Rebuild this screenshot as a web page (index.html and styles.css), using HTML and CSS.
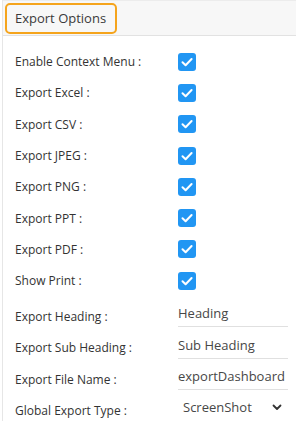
FILE: index.html
```html
<!DOCTYPE html>
<html lang="en">
<head>
  <meta charset="UTF-8" />
  <meta name="viewport" content="width=device-width, initial-scale=1.0"/>
  <title>Export Options</title>
  <link rel="stylesheet" href="styles.css">
</head>
<body>
  <div class="panel">
    <div class="panel-head">
      <span class="head-title">Export Options</span>
    </div>

    <div class="rows">
      <div class="row"><label>Enable Context Menu :</label><span class="check"></span></div>
      <div class="row"><label>Export Excel :</label><span class="check"></span></div>
      <div class="row"><label>Export CSV :</label><span class="check"></span></div>
      <div class="row"><label>Export JPEG :</label><span class="check"></span></div>
      <div class="row"><label>Export PNG :</label><span class="check"></span></div>
      <div class="row"><label>Export PPT :</label><span class="check"></span></div>
      <div class="row"><label>Export PDF :</label><span class="check"></span></div>
      <div class="row"><label>Show Print :</label><span class="check"></span></div>
      <div class="row field"><label>Export Heading :</label><input type="text" value="Heading" /></div>
      <div class="row field"><label>Export Sub Heading :</label><input type="text" value="Sub Heading" /></div>
      <div class="row field"><label>Export File Name :</label><input type="text" value="exportDashboard" /></div>
      <div class="row field"><label>Global Export Type :</label>
        <div class="select">
          <span>ScreenShot</span>
          <svg width="10" height="7" viewBox="0 0 10 7"><path d="M1.5 1.5 L5 5 L8.5 1.5" fill="none" stroke="#333" stroke-width="1.8" stroke-linecap="round" stroke-linejoin="round"/></svg>
        </div>
      </div>
    </div>
  </div>

  <template id="tick">
    <svg width="18" height="18" viewBox="0 0 18 18"><path d="M4.5 9.3 L7.6 12.3 L13.6 6" fill="none" stroke="#fff" stroke-width="2" stroke-linecap="round" stroke-linejoin="round"/></svg>
  </template>
  <script>
    const tick = document.getElementById("tick");
    document.querySelectorAll(".check").forEach(box => {
      box.appendChild(tick.content.cloneNode(true));
    });
  </script>
</body>
</html>
```

FILE: styles.css
```css
* {
  box-sizing: border-box;
}

body {
  margin: 0;
  padding: 0;
  font-family: "Open Sans", "Noto Sans", sans-serif;
  color: #333;
  background: #fff;
}

.panel {
  margin-left: 2px;
  border-left: 1px solid #e6e6e6;
  min-height: 421px;
}

.panel-head {
  height: 36px;
  padding: 2px 0 0 2px;
  background: #f7f7f7;
  border-top: 1px solid #ececec;
  border-bottom: 1px solid #e2e2e2;
}

.head-title {
  display: inline-block;
  height: 31px;
  line-height: 27px;
  padding: 0 9px 0 8px;
  border: 2.5px solid #f5a41c;
  border-radius: 5px;
  font-size: 13px;
  color: #3a3a3a;
}

.rows {
  padding-top: 10px;
}

.row {
  display: grid;
  grid-template-columns: 163px 1fr;
  align-items: center;
  height: 31.3px;
  padding-left: 12px;
}

.row label {
  font-size: 12px;
  color: #333;
}

.field {
  height: 31.5px;
}

.field label {
  padding-top: 8px;
}

.check {
  display: block;
  width: 18px;
  height: 18px;
  border-radius: 3px;
  background: #2196f3;
}

.check svg {
  display: block;
}

.field input,
.select {
  width: 110px;
  height: 30px;
  border: none;
  border-bottom: 1px solid #e0e0e0;
  font-family: inherit;
  font-size: 13px;
  color: #474747;
  padding: 3px 0 0 0;
  outline: none;
  background: transparent;
}

.select {
  display: flex;
  align-items: center;
  justify-content: space-between;
  padding: 2px 6px 0 5px;
  border-bottom-color: #f0f0f0;
}

.select svg {
  display: block;
}
```
